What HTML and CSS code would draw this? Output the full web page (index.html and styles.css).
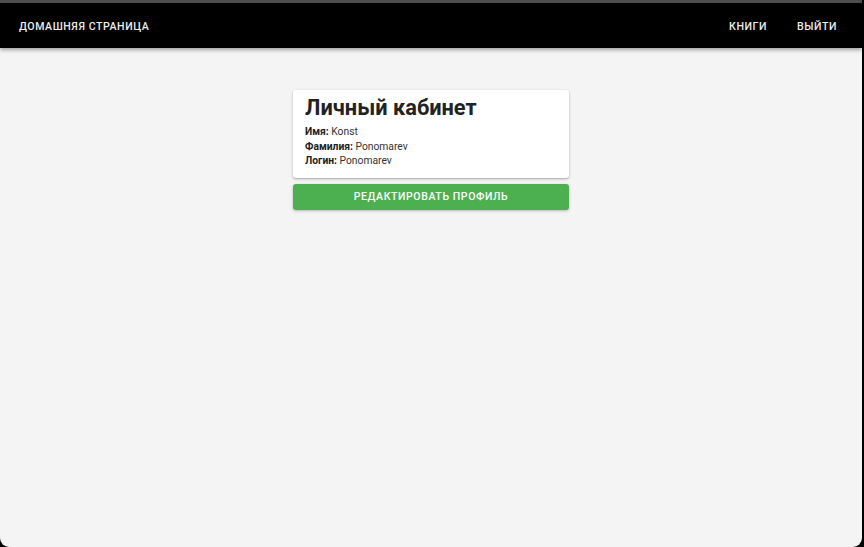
FILE: index.html
```html
<!DOCTYPE html>
<html lang="ru">
<head>
<meta charset="utf-8">
<title>Личный кабинет</title>
<link rel="stylesheet" href="styles.css">
</head>
<body>
<div class="window">
  <header class="appbar">
    <a class="nav-link home">Домашняя страница</a>
    <nav class="nav-right">
      <a class="nav-link">Книги</a>
      <a class="nav-link">Выйти</a>
    </nav>
  </header>
  <main class="content">
    <section class="profile">
      <div class="card">
        <h1 class="title">Личный кабинет</h1>
        <p class="field"><b>Имя:</b> Konst</p>
        <p class="field"><b>Фамилия:</b> Ponomarev</p>
        <p class="field"><b>Логин:</b> Ponomarev</p>
      </div>
      <button class="edit-btn">Редактировать профиль</button>
    </section>
  </main>
</div>
</body>
</html>
```
FILE: styles.css
```css
html, body {
  margin: 0;
  padding: 0;
  height: 100%;
  background: #000;
  overflow: hidden;
}
body {
  font-family: Roboto, "Noto Sans", sans-serif;
}
.window {
  width: 862px;
  height: 547px;
  box-sizing: border-box;
  border-top: 3px solid #4d4d4d;
  background: #f4f4f4;
  border-radius: 0 0 9px 9px;
  overflow: hidden;
  display: flex;
  flex-direction: column;
}
.appbar {
  height: 45px;
  flex: none;
  box-sizing: border-box;
  background: #000;
  display: flex;
  align-items: center;
  justify-content: space-between;
  padding: 2px 25px 0 19px;
  box-shadow: 0 2px 4px rgba(0,0,0,0.35);
  position: relative;
  z-index: 1;
}
.nav-link {
  color: #ececec;
  font-size: 10.6px;
  font-weight: 500;
  letter-spacing: 0.55px;
  text-transform: uppercase;
}
.nav-right {
  display: flex;
  gap: 30px;
}
.content {
  flex: 1;
  display: flex;
  justify-content: center;
  padding-top: 42px;
}
.profile {
  width: 276px;
  display: flex;
  flex-direction: column;
  gap: 6px;
}
.card {
  background: #fff;
  border-radius: 3px;
  box-shadow: 0 1px 3px rgba(0,0,0,0.25), 0 1px 1px rgba(0,0,0,0.1);
  padding: 5px 12px 9px;
  color: #222;
}
.title {
  margin: 0 0 5px;
  font-size: 21.8px;
  font-weight: 700;
  line-height: 25px;
  color: #222;
}
.field {
  margin: 0;
  font-size: 10.3px;
  line-height: 14.5px;
  color: #333;
}
.field b {
  font-weight: 700;
  color: #222;
}
.edit-btn {
  height: 26px;
  border: none;
  border-radius: 3px;
  background: #4caf50;
  color: #fff;
  font-family: Roboto, "Noto Sans", sans-serif;
  font-size: 10.5px;
  font-weight: 500;
  letter-spacing: 0.6px;
  text-transform: uppercase;
  box-shadow: 0 1px 3px rgba(0,0,0,0.25);
  padding: 0;
}
```
